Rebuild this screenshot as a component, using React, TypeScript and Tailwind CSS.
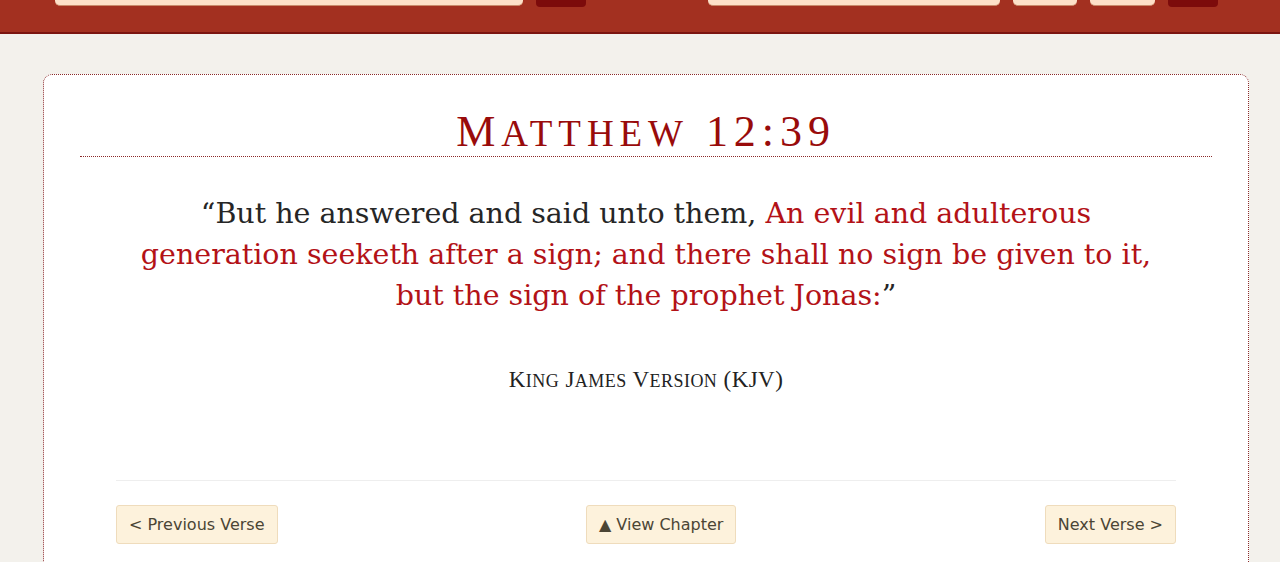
import React from "react";

const serif = "font-['Liberation_Serif',serif]";

const NavButton = ({ children }: { children: React.ReactNode }) => (
  <a
    href="#"
    className="h-[39px] px-[12px] flex items-center bg-[#fdf2dc] border border-[#efdcbc] rounded-[3px] text-[16px] text-[#4b4535] font-['DejaVu_Sans',sans-serif]"
  >
    {children}
  </a>
);

const Header = () => (
  <header className="h-[34px] bg-[#a33020] border-b-2 border-[#7b1510] overflow-hidden">
    <div className="-mt-[24px] flex justify-between pl-[55px] pr-[62px]">
      <div className="flex gap-[13px]">
        <div className="w-[468px] h-[30px] bg-[#fde0c8] rounded-[5px] border-b border-[#c98a6a]" />
        <div className="w-[50px] h-[31px] bg-[#7c0b0b] rounded-[4px]" />
      </div>
      <div className="flex gap-[13px]">
        <div className="w-[292px] h-[30px] bg-[#fde0c8] rounded-[5px] border-b border-[#c98a6a]" />
        <div className="w-[64px] h-[30px] bg-[#fde0c8] rounded-[5px] border-b border-[#c98a6a]" />
        <div className="w-[65px] h-[30px] bg-[#fde0c8] rounded-[5px] border-b border-[#c98a6a]" />
        <div className="w-[50px] h-[31px] bg-[#7c0b0b] rounded-[4px]" />
      </div>
    </div>
  </header>
);

// big capitals + smaller uppercase, the way the display face sets small caps
const Caps = ({ text, big, small }: { text: string; big: string; small: string }) => (
  <>
    {text.split(" ").map((word, i) => (
      <React.Fragment key={i}>
        {i > 0 && " "}
        <span className={big}>{word[0]}</span>
        <span className={small}>{word.slice(1).toUpperCase()}</span>
      </React.Fragment>
    ))}
  </>
);

export default function App() {
  return (
    <div className="min-h-[562px] bg-[#f3f1ec]">
      <Header />
      <main className="pt-[40px] pl-[43px]">
        <article className="w-[1206px] bg-white border border-dotted border-[#8b2a2a] rounded-[9px] px-[36px] pt-[35px] pb-[40px]">
          <h1
            className={`${serif} text-center text-[44px] leading-[44px] tracking-[0.135em] text-[#990b0b] border-b border-dotted border-[#8b2a2a]`}
          >
            <span>M</span>
            <span className="text-[37px]">ATTHEW</span> 12:39
          </h1>

          <div className="px-[36px]">
            <p className="mt-[36px] text-center whitespace-nowrap text-[28.5px] leading-[41px] text-[#262626] font-['DejaVu_Serif',serif]">
              “But he answered and said unto them,{" "}
              <span className="text-[#b31217]">
                An evil and adulterous
                <br />
                generation seeketh after a sign; and there shall no sign be given to it,
                <br />
                but the sign of the prophet Jonas:
              </span>
              ”
            </p>

            <p className={`${serif} mt-[49px] text-center text-[23px] leading-[30px] tracking-[0.02em] text-[#222]`}>
              <Caps text="King James Version" big="" small="text-[18px]" /> (KJV)
            </p>

            <hr className="mt-[84px] border-0 border-t border-[#eeeeee]" />

            <nav className="mt-[24px] flex justify-between">
              <NavButton>&lt; Previous Verse</NavButton>
              <NavButton>▲ View Chapter</NavButton>
              <NavButton>Next Verse &gt;</NavButton>
            </nav>
          </div>
        </article>
      </main>
    </div>
  );
}
